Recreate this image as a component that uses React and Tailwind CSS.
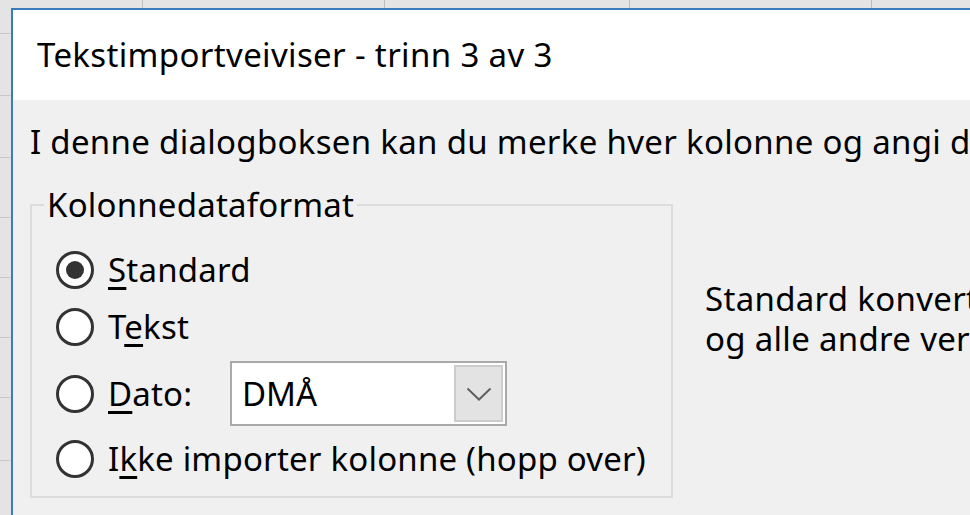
import React from 'react';

const font = { fontFamily: '"Noto Sans", "Open Sans", sans-serif' };

const Radio = ({ checked }) => (
  <span className="flex h-[38px] w-[38px] shrink-0 items-center justify-center rounded-full border-[3px] border-[#333333] bg-white">
    {checked && <span className="h-[18px] w-[18px] rounded-full bg-[#333333]" />}
  </span>
);

const Label = ({ before, keyChar, after }) => (
  <span className="whitespace-nowrap text-[33px] leading-[40px] tracking-[0.2px] text-black">
    {before}
    <span className="underline decoration-[3px] underline-offset-[5px]">{keyChar}</span>
    {after}
  </span>
);

const Combo = () => (
  <div className="flex h-[65px] w-[277px] border-2 border-[#a9a9a9] bg-white">
    <div className="flex flex-1 items-center pl-[10px] text-[33px] text-black">DMÅ</div>
    <div className="m-[2px] flex w-[49px] items-center justify-center border-2 border-[#cccccc] bg-[#e3e3e3]">
      <svg width="26" height="14" viewBox="0 0 26 14" fill="none">
        <path d="M1.5 1.5 L13 12.5 L24.5 1.5" stroke="#606060" strokeWidth="2" />
      </svg>
    </div>
  </div>
);

const GridTop = () => (
  <div className="flex h-[8px] shrink-0 bg-[#e4e4e4]">
    <div className="w-[143px] border-r border-[#bdbdbd]" />
    <div className="w-[242px] border-r border-[#bdbdbd]" />
    <div className="w-[245px] border-r border-[#bdbdbd]" />
    <div className="w-[242px] border-r border-[#bdbdbd]" />
    <div className="flex-1" />
  </div>
);

const GridLeft = () => (
  <div className="flex w-[11px] shrink-0 flex-col bg-[#e4e4e4]">
    {[26, 62, 62, 60, 60, 60, 60, 63, 60].map((h, i) => (
      <div key={i} style={{ height: h }} className="shrink-0 border-b border-[#c8c8c8]" />
    ))}
  </div>
);

export default function App() {
  return (
    <div className="flex h-[515px] w-[970px] flex-col overflow-hidden bg-[#e4e4e4]" style={font}>
      <GridTop />
      <div className="flex flex-1">
        <GridLeft />
        <div className="flex flex-1 flex-col border-l-2 border-t-2 border-[#3b7cbc]">
          <div className="flex h-[90px] shrink-0 items-center bg-white pl-[24px] text-[33px] tracking-[0.35px] text-black">
            Tekstimportveiviser - trinn 3 av 3
          </div>
          <div className="flex-1 bg-[#f0f0f0] pl-[17px]">
            <p className="mt-[22px] whitespace-nowrap text-[33px] leading-[40px] tracking-[0.3px] text-black">
              I denne dialogboksen kan du merke hver kolonne og angi dataformatet.
            </p>
            <div className="mt-[27px] flex">
              <fieldset className="w-[643px] shrink-0 border-2 border-[#dcdcdc] pb-[4px] pl-[24px] pt-[20px]">
                <legend className="-ml-[12px] px-[3px] text-[33px] leading-[32px] tracking-[0.2px] text-black">Kolonnedataformat</legend>
                <div className="flex h-[57px] items-center gap-[14px]">
                  <Radio checked />
                  <Label before="" keyChar="S" after="tandard" />
                </div>
                <div className="flex h-[57px] items-center gap-[14px]">
                  <Radio />
                  <Label before="T" keyChar="e" after="kst" />
                </div>
                <div className="flex items-center gap-[14px] pt-[6px]">
                  <Radio />
                  <div className="w-[108px]">
                    <Label before="" keyChar="D" after="ato:" />
                  </div>
                  <Combo />
                </div>
                <div className="flex h-[66px] items-center gap-[14px]">
                  <Radio />
                  <Label before="I" keyChar="k" after="ke importer kolonne (hopp over)" />
                </div>
              </fieldset>
              <div className="ml-[32px] mt-[90px] whitespace-nowrap text-[33px] leading-[40px] tracking-[0.3px] text-black">
                <p>Standard konverterer numeriske verdier til tall, datoverdier til datoer</p>
                <p>og alle andre verdier til tekst.</p>
              </div>
            </div>
          </div>
        </div>
      </div>
    </div>
  );
}
